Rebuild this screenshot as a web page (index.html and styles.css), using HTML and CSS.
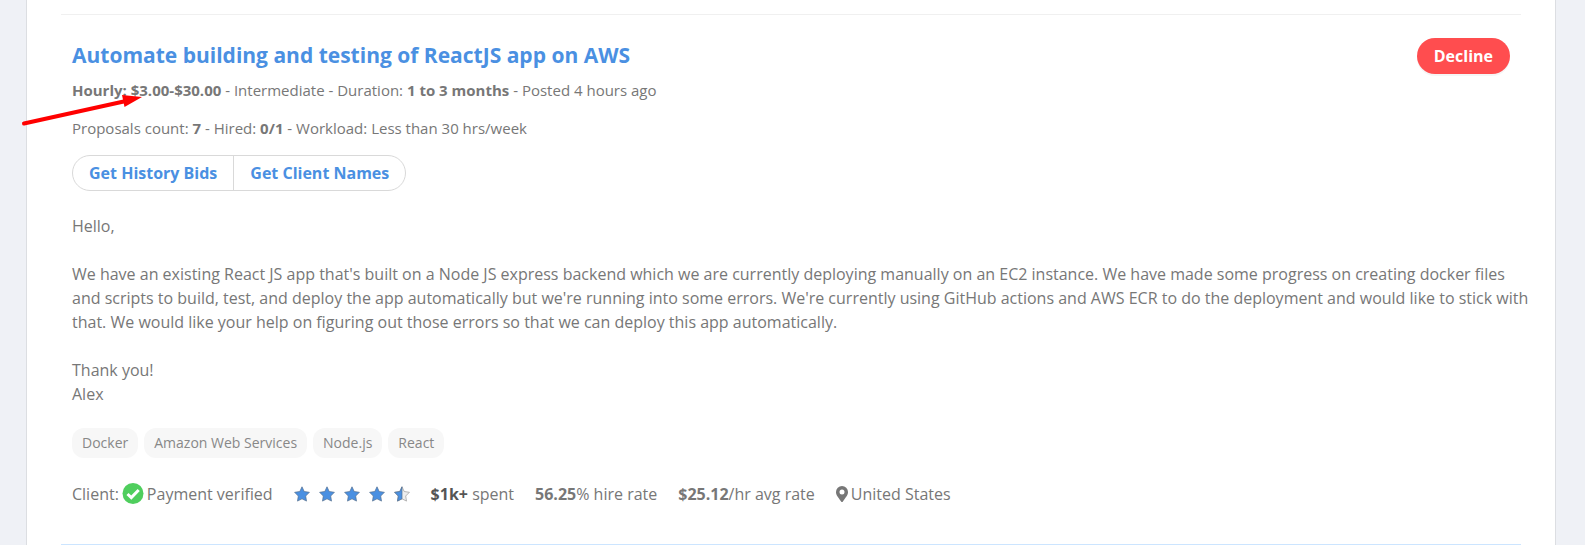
FILE: index.html
```
<!DOCTYPE html>
<html lang="en">
<head>
    <meta charset="UTF-8">
    <title>Jobs</title>
    <link rel="stylesheet" href="styles.css">
</head>
<body>
    <svg class="defs" width="0" height="0" aria-hidden="true">
        <symbol id="star" viewBox="0 0 16 16">
            <path d="M8 .8l2.200 4.700 5.200.8-3.700 3.700.8 5.100L8 12.800l-4.500 2.300.8-5.100L.6 6.300l5.200-.8z"/>
        </symbol>
    </svg>
    <main class="panel">
        <article class="job">
            <header class="job-head">
                <h2 class="title"><a href="#">Automate building and testing of ReactJS app on AWS</a></h2>
                <button type="button" class="decline">Decline</button>
            </header>
            <p class="meta"><b>Hourly: $3.00-$30.00</b> - Intermediate - Duration: <b>1 to 3 months</b> - Posted 4 hours ago</p>
            <p class="meta">Proposals count: <b>7</b> - Hired: <b>0/1</b> - Workload: Less than 30 hrs/week</p>
            <div class="btn-group">
                <button type="button">Get History Bids</button>
                <button type="button">Get Client Names</button>
            </div>
            <div class="description">
                <p>Hello,</p>
                <p>We have an existing React JS app that's built on a Node JS express backend which we are currently deploying manually on an EC2 instance. We have made some progress on creating docker files and scripts to build, test, and deploy the app automatically but we're running into some errors. We're currently using GitHub actions and AWS ECR to do the deployment and would like to stick with that. We would like your help on figuring out those errors so that we can deploy this app automatically.</p>
                <p>Thank you!<br>Alex</p>
            </div>
            <ul class="tags">
                <li>Docker</li>
                <li>Amazon Web Services</li>
                <li>Node.js</li>
                <li>React</li>
            </ul>
            <div class="client">
                <span class="verified">Client:
                    <svg class="check" width="22" height="22" viewBox="0 0 22 22">
                        <circle cx="11" cy="10.500" r="10.500"/>
                        <path d="M5.500 11l3.800 3.600 7.400-7.600"/>
                    </svg>
                    Payment verified</span>
                <span class="stars" role="img" aria-label="4.5 stars">
                    <svg width="16" height="16"><use href="#star"/></svg>
                    <svg width="16" height="16"><use href="#star"/></svg>
                    <svg width="16" height="16"><use href="#star"/></svg>
                    <svg width="16" height="16"><use href="#star"/></svg>
                    <svg width="16" height="16" viewBox="0 0 16 16">
                        <use href="#star" width="16" height="16" class="empty"/>
                        <path d="M8 .8v12l-4.500 2.300.8-5.100L.6 6.300l5.200-.8z"/>
                    </svg>
                </span>
                <span><b class="spent">$1k+</b> spent</span>
                <span><b>56.25</b>% hire rate</span>
                <span><b>$25.12</b>/hr avg rate</span>
                <span class="place">
                    <svg width="12" height="16" viewBox="0 0 12 16">
                        <path fill-rule="evenodd" d="M6 0a6 6 0 0 1 6 6c0 2.600-1 3.900-5.300 9.700a.9.9 0 0 1-1.400 0C1 9.900 0 8.600 0 6a6 6 0 0 1 6-6zm0 3.500a2.500 2.500 0 1 0 0 5 2.500 2.500 0 0 0 0-5z"/>
                    </svg>
                    United States</span>
            </div>
            <!-- pointer to the hourly rate -->
            <svg class="arrow" width="124" height="36" viewBox="0 0 124 36">
                <path class="shaft" d="M4 28.500L106 6"/>
                <path class="head" d="M102 0l20 2-17.500 10z"/>
            </svg>
        </article>
    </main>
</body>
</html>
```
FILE: styles.css
```
*{
    margin: 0;
    padding: 0;
    box-sizing: border-box;
}
body{
    background: #eff1f6;
    color: #777;
    font: 16px/24px "Open Sans", sans-serif;
}
a{
    color: #4a90e2;
    text-decoration: none;
}
.defs{
    position: absolute;
}
.panel{
    margin: 0 29px 0 26px;
    padding: 14px 34px 0;
    background: #fff;
    border: 1px solid #dcdee2;
    border-top: 0;
    border-bottom: 0;
}
.job{
    position: relative;
    padding: 23px 11px 38px;
    border-top: 1px solid #f0f0f0;
    border-bottom: 1px solid #cce5ff;
}
.job-head{
    display: flex;
    justify-content: space-between;
    align-items: flex-start;
    margin-bottom: 4px;
}
.title{
    font-size: 21px;
    font-weight: 700;
    line-height: 34px;
}
button{
    font: bold 16px/24px "Open Sans", sans-serif;
    cursor: pointer;
}
.decline{
    height: 36px;
    padding: 0 17px;
    border: 0;
    border-radius: 18px;
    background: #ff4d4f;
    color: #fff;
    box-shadow: 0 2px 0 rgba(0,0,0,.04);
}
.meta{
    font-size: 15px;
    margin-bottom: 14px;
}
.btn-group{
    display: flex;
    width: fit-content;
    margin-top: 15px;
    border: 1px solid #d9d9d9;
    border-radius: 18px;
}
.btn-group button{
    height: 34px;
    padding: 0 16px;
    border: 0;
    background: none;
    color: #4a90e2;
}
.btn-group button + button{
    border-left: 1px solid #d9d9d9;
}
.description{
    margin: 23px -20px 22px 0;
}
.description p + p{
    margin-top: 24px;
}
.tags{
    display: flex;
    gap: 6px;
    list-style: none;
    font-size: 14px;
    line-height: 30px;
    color: #888;
}
.tags li{
    padding: 0 10px;
    border-radius: 12px;
    background: #f7f7f7;
}
.client{
    display: flex;
    align-items: center;
    gap: 21px;
    margin-top: 24px;
}
.verified,
.place{
    display: flex;
    align-items: center;
    gap: 3px;
}
.check circle{
    fill: #4fce5d;
}
.check path{
    fill: none;
    stroke: #fff;
    stroke-width: 3;
}
.stars{
    display: flex;
    gap: 9px;
    fill: #4a90e2;
    stroke: #55708f;
    stroke-width: .7;
}
.stars .empty{
    fill: #eee;
    stroke: #999;
}
.spent{
    color: #555;
}
.place svg{
    fill: #777;
}
.arrow{
    position: absolute;
    left: -41px;
    top: 80px;
}
.arrow .shaft{
    fill: none;
    stroke: #f00;
    stroke-width: 4;
    stroke-linecap: round;
}
.arrow .head{
    fill: #f00;
}
```
